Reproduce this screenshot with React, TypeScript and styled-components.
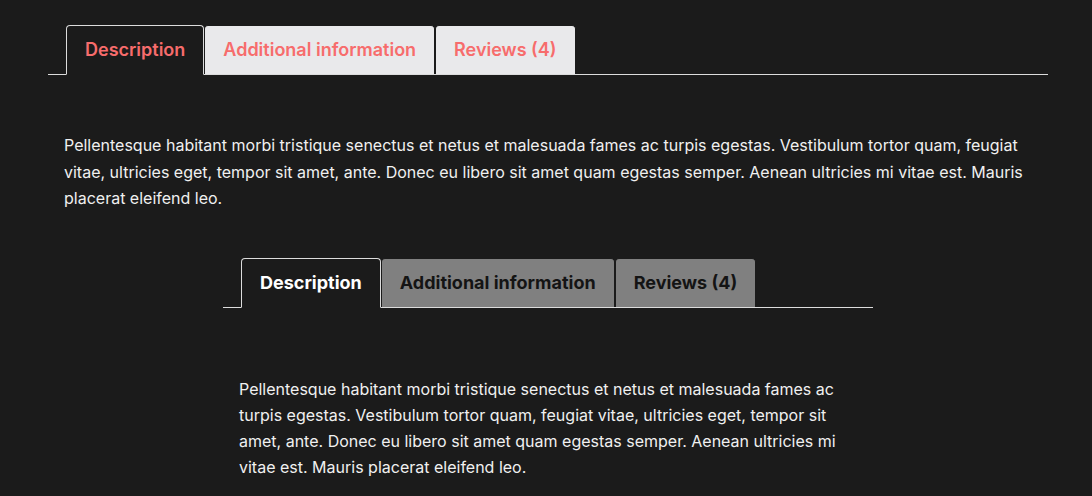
import React, { useState } from "react";
import styled, { createGlobalStyle } from "styled-components";

const Global = createGlobalStyle`
  html, body { margin: 0; padding: 0; background: #1b1b1b; }
  body { font-family: Inter, "Noto Sans", sans-serif; color: #f2f2f2; }
  * { box-sizing: border-box; }
`;

const Page = styled.div`
  padding: 25px 0 0 4px;
  display: flex;
  flex-direction: column;
  align-items: center;
`;

const Widget = styled.section<{ $width: number }>`
  width: ${(p) => p.$width}px;
`;

const TabList = styled.ul`
  list-style: none;
  margin: 0;
  padding: 0 0 0 18px;
  display: flex;
  align-items: flex-end;
  border-bottom: 1px solid #dcdcdc;
`;

type Variant = "light" | "dark";

const Tab = styled.li<{ $active: boolean; $variant: Variant }>`
  height: ${(p) => (p.$active ? 50 : 49)}px;
  margin-bottom: ${(p) => (p.$active ? -1 : 0)}px;
  padding: 0 18px 1px;
  display: flex;
  align-items: center;
  border: 1px solid ${(p) => (p.$active ? "#dcdcdc" : "#1b1b1b")};
  border-bottom: ${(p) => (p.$active ? "1px solid #1b1b1b" : "none")};
  border-radius: 4px 4px 0 0;
  background: ${(p) =>
    p.$active ? "#1b1b1b" : p.$variant === "light" ? "#e9e9eb" : "#808080"};
  color: ${(p) =>
    p.$variant === "light" ? "#f76c6c" : p.$active ? "#ffffff" : "#141414"};
  font-size: 18px;
  font-weight: ${(p) => (p.$variant === "light" ? 600 : 700)};
  cursor: pointer;
  white-space: nowrap;
`;

const Panel = styled.p<{ $top: number; $bottom: number; $lh: number }>`
  margin: 0;
  padding: ${(p) => p.$top}px 16px ${(p) => p.$bottom}px;
  font-size: 16px;
  line-height: ${(p) => p.$lh}px;
  color: #f0f0f0;
`;

const TEXT =
  "Pellentesque habitant morbi tristique senectus et netus et malesuada fames ac turpis egestas. Vestibulum tortor quam, feugiat vitae, ultricies eget, tempor sit amet, ante. Donec eu libero sit amet quam egestas semper. Aenean ultricies mi vitae est. Mauris placerat eleifend leo.";

const TABS = ["Description", "Additional information", "Reviews (4)"];

function Tabs({
  width,
  variant,
  top,
  bottom,
  lh,
}: {
  width: number;
  variant: Variant;
  top: number;
  bottom: number;
  lh: number;
}) {
  const [active, setActive] = useState(0);
  return (
    <Widget $width={width}>
      <TabList>
        {TABS.map((t, i) => (
          <Tab
            key={t}
            $active={i === active}
            $variant={variant}
            onClick={() => setActive(i)}
          >
            {t}
          </Tab>
        ))}
      </TabList>
      <Panel $top={top} $bottom={bottom} $lh={lh}>
        {TEXT}
      </Panel>
    </Widget>
  );
}

export default function App() {
  return (
    <>
      <Global />
      <Page>
        <Tabs width={1000} variant="light" top={57} bottom={46} lh={26.7} />
        <Tabs width={650} variant="dark" top={68} bottom={20} lh={26} />
      </Page>
    </>
  );
}
